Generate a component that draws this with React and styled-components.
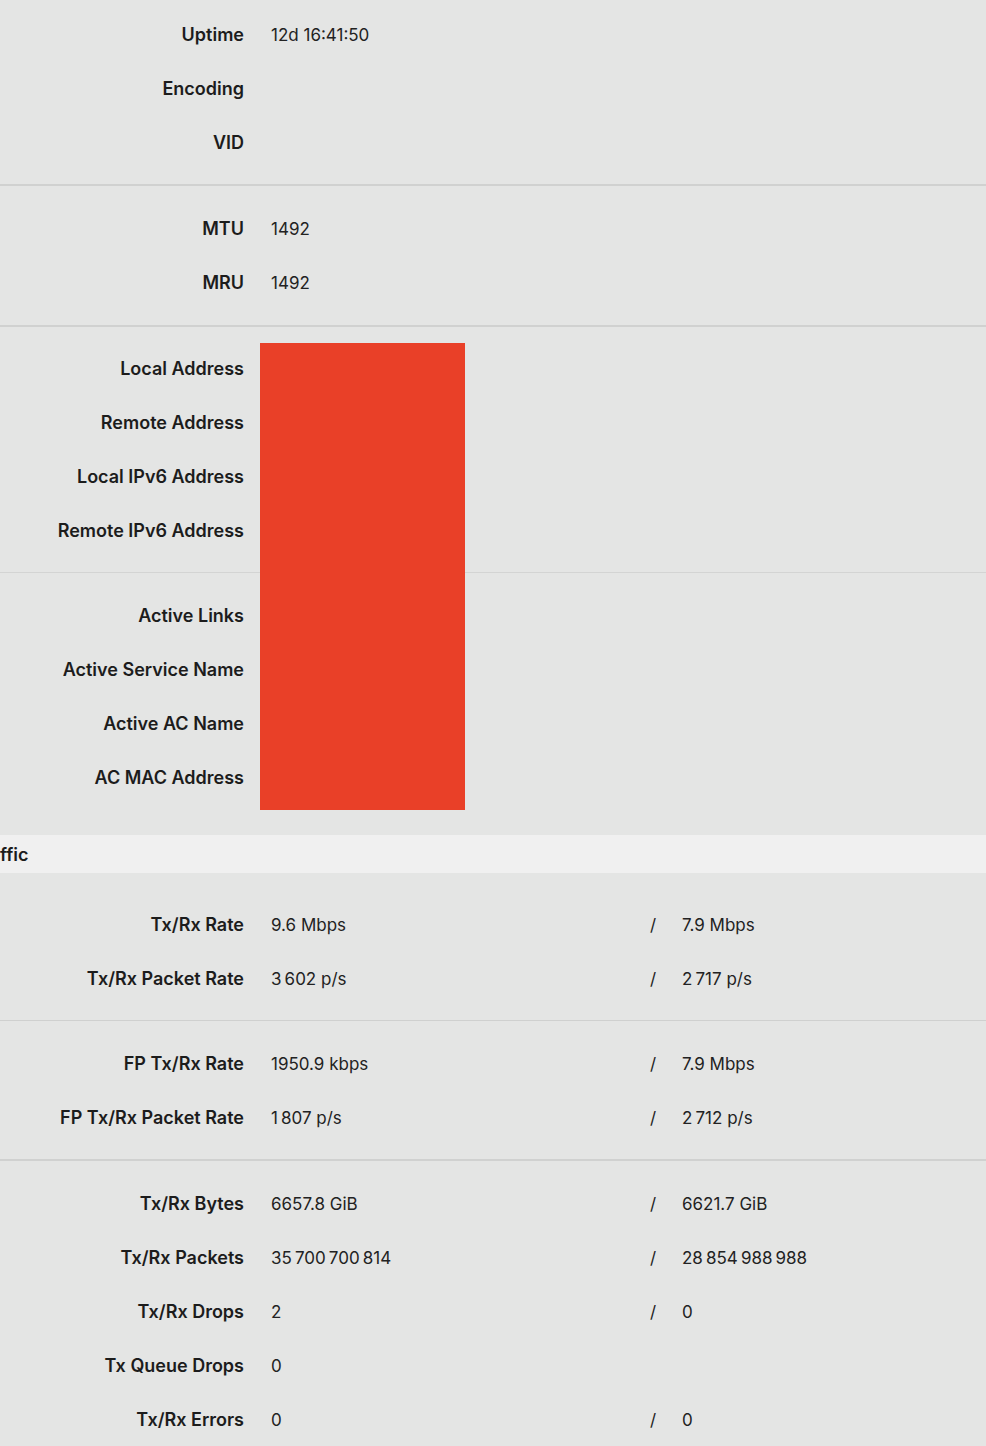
import styled, { createGlobalStyle } from "styled-components";

const GlobalStyle = createGlobalStyle`
  html, body {
    margin: 0;
    padding: 0;
    background: #e4e5e4;
  }
  body {
    font-family: Inter, "Noto Sans", "Liberation Sans", sans-serif;
    color: #1e1e1e;
  }
`;

// thousands separator is a narrow no-break space
const n = (s) => s.replace(/ (?=\d)/g, "\u202F");

const sections = [
  {
    top: 7, bottom: 15, border: "2px solid #d0d1d0",
    rows: [
      { label: "Uptime", value: "12d 16:41:50" },
      { label: "Encoding" },
      { label: "VID" },
    ],
  },
  {
    top: 15, bottom: 16, border: "2px solid #d0d1d0",
    rows: [
      { label: "MTU", value: "1492" },
      { label: "MRU", value: "1492" },
    ],
  },
];

const hidden = [
  {
    top: 14, bottom: 15, border: "1px solid #d3d4d3",
    rows: [
      { label: "Local Address" },
      { label: "Remote Address" },
      { label: "Local IPv6 Address" },
      { label: "Remote IPv6 Address" },
    ],
  },
  {
    top: 15, bottom: 31, border: "none",
    rows: [
      { label: "Active Links" },
      { label: "Active Service Name" },
      { label: "Active AC Name" },
      { label: "AC MAC Address" },
    ],
  },
];

const traffic = [
  {
    top: 24, bottom: 15, border: "1px solid #cfd0cf",
    rows: [
      { label: "Tx/Rx Rate", value: "9.6 Mbps", rx: "7.9 Mbps" },
      { label: "Tx/Rx Packet Rate", value: n("3 602") + " p/s", rx: n("2 717") + " p/s" },
    ],
  },
  {
    top: 15, bottom: 15, border: "2px solid #d0d1d0",
    rows: [
      { label: "FP Tx/Rx Rate", value: "1950.9 kbps", rx: "7.9 Mbps" },
      { label: "FP Tx/Rx Packet Rate", value: n("1 807") + " p/s", rx: n("2 712") + " p/s" },
    ],
  },
  {
    top: 15, bottom: 0, border: "none",
    rows: [
      { label: "Tx/Rx Bytes", value: "6657.8 GiB", rx: "6621.7 GiB" },
      { label: "Tx/Rx Packets", value: n("35 700 700 814"), rx: n("28 854 988 988") },
      { label: "Tx/Rx Drops", value: "2", rx: "0" },
      { label: "Tx Queue Drops", value: "0" },
      { label: "Tx/Rx Errors", value: "0", rx: "0" },
    ],
  },
];

const Group = ({ section }) => (
  <Section $top={section.top} $bottom={section.bottom} $border={section.border}>
    {section.rows.map((r) => (
      <Row key={r.label}>
        <Label>{r.label}</Label>
        <Value>{r.value}</Value>
        {r.rx !== undefined && <Slash>/</Slash>}
        {r.rx !== undefined && <Value>{r.rx}</Value>}
      </Row>
    ))}
  </Section>
);

export default function App() {
  return (
    <Page>
      <GlobalStyle />
      {sections.map((s, i) => (
        <Group key={i} section={s} />
      ))}
      <Masked>
        {hidden.map((s, i) => (
          <Group key={i} section={s} />
        ))}
        <Redaction />
      </Masked>
      <Header>ffic</Header>
      {traffic.map((s, i) => (
        <Group key={i} section={s} />
      ))}
    </Page>
  );
}

const Page = styled.div`
  width: 986px;
  height: 1446px;
  overflow: hidden;
  background: #e4e5e4;
`;

const Section = styled.div`
  padding-top: ${(p) => p.$top}px;
  padding-bottom: ${(p) => p.$bottom}px;
  border-bottom: ${(p) => p.$border};
`;

const Row = styled.div`
  display: grid;
  grid-template-columns: 271px 379px 32px 1fr;
  align-items: center;
  box-sizing: border-box;
  height: 54px;
  padding-top: 2px;
  font-size: 17px;
`;

const Label = styled.div`
  text-align: right;
  padding-right: 27px;
  margin-top: -2px;
  font-size: 18px;
  font-weight: 600;
  color: #1c1c1c;
  white-space: nowrap;
`;

const Value = styled.div`
  font-weight: 400;
  color: #222;
  white-space: nowrap;
`;

const Slash = styled.div`
  font-weight: 400;
  color: #222;
`;

const Masked = styled.div`
  position: relative;
`;

const Redaction = styled.div`
  position: absolute;
  left: 260px;
  top: 16px;
  width: 205px;
  height: 467px;
  background: #e94028;
`;

const Header = styled.div`
  height: 38px;
  display: flex;
  align-items: center;
  background: #f0f0f0;
  font-size: 18px;
  font-weight: 600;
  color: #1c1c1c;
`;
